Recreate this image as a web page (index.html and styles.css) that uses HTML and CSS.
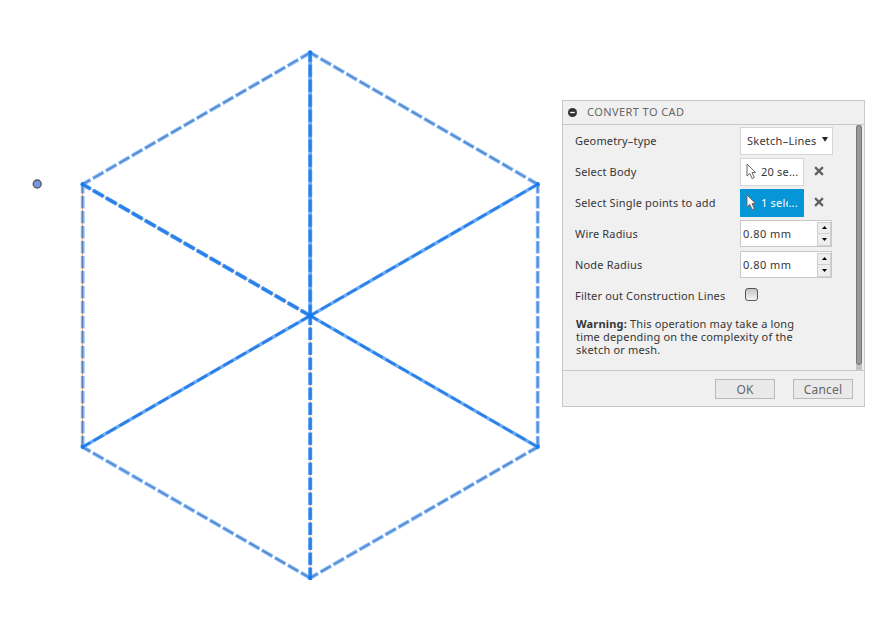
FILE: index.html
```html
<!DOCTYPE html>
<html lang="en">
<head>
<meta charset="utf-8">
<title>Convert to CAD</title>
<link rel="stylesheet" href="styles.css">
</head>
<body>
<main class="workspace">
  <svg class="sketch" width="562" height="626" viewBox="0 0 562 626">
    <g class="edge-halo">
      <path d="M82.700 184.300L310.200 52.700"/><path d="M310.200 52.700L537.700 184.300"/><path d="M537.700 184.300V447"/>
      <path d="M82.700 447L310.200 578"/><path d="M310.200 578L537.700 447"/><path d="M82.700 184.300V447"/>
    </g>
    <g class="edge-core">
      <path d="M82.700 184.300L310.200 52.700"/><path d="M310.200 52.700L537.700 184.300"/><path d="M537.700 184.300V447"/>
      <path d="M82.700 447L310.200 578"/><path d="M310.200 578L537.700 447"/>
    </g>
    <g class="trace"><path d="M82.500 184V447"/><path d="M82.700 184.300L310.200 315.700"/><path d="M310.200 315.700V578"/></g>
    <path class="edge-thin" d="M82.500 184V447"/>
    <g class="spoke-base"><path d="M310.200 52.700V315.700"/><path d="M82.700 447L310.200 315.700"/><path d="M310.200 315.700L537.700 184.300"/><path d="M310.200 315.700L537.700 447"/></g>
    <g class="spoke-halo"><path d="M82.700 184.300L310.200 315.700"/><path d="M310.200 315.700V578"/><path d="M310.200 52.700V315.700"/></g>
    <g class="spoke-core"><path d="M310.200 52.700V315.700"/><path d="M82.700 447L310.200 315.700"/><path d="M310.200 315.700L537.700 184.300"/><path d="M310.200 315.700L537.700 447"/><path d="M82.700 184.300L310.200 315.700"/><path d="M310.200 315.700V578"/></g>
    <g class="vertices"><circle cx="310.200" cy="52.500" r="2.200"/><circle cx="82.700" cy="184.300" r="2.200"/><circle cx="537.700" cy="184.300" r="2.200"/><circle cx="82.700" cy="446.800" r="2.200"/><circle cx="537.700" cy="446.800" r="2.200"/><circle cx="310.200" cy="578" r="2.200"/><circle cx="310.200" cy="315.700" r="3"/></g>
    <circle class="origin" cx="37.200" cy="184" r="4"/>
  </svg>

  <section class="dialog">
    <header class="title-bar">
      <svg class="collapse" width="9" height="9" viewBox="0 0 9 9"><circle cx="4.500" cy="4.500" r="4.500" fill="#333"/><path d="M2.200 4.500H6.800" stroke="#fff" stroke-width="1.300"/></svg>
      <span class="title">CONVERT TO CAD</span>
    </header>
    <div class="body">
      <div class="form">
        <div class="row"><span class="label">Geometry–type</span><span class="dropdown"><span>Sketch–Lines</span><svg width="6" height="5" viewBox="0 0 6 5"><path d="M0 0H6L3 4.800Z" fill="#222"/></svg></span></div>
        <div class="row"><span class="label">Select Body</span><span class="picker"><svg class="cursor" width="11" height="17" viewBox="0 0 11 17"><path d="M1 1V13L3.800 10.400L6.100 15.600L8.300 14.500L6 9.600H9.700Z"/></svg><span>20 se...</span></span><svg class="clear" width="10" height="10" viewBox="0 0 10 10"><path d="M1.100 1.100L8.900 8.900M8.900 1.100L1.100 8.900"/></svg></div>
        <div class="row"><span class="label">Select Single points to add</span><span class="picker active"><svg class="cursor" width="11" height="17" viewBox="0 0 11 17"><path d="M1 1V13L3.800 10.400L6.100 15.600L8.300 14.500L6 9.600H9.700Z"/></svg><span>1 sel<span class="cut">e</span>...</span></span><svg class="clear" width="10" height="10" viewBox="0 0 10 10"><path d="M1.100 1.100L8.900 8.900M8.900 1.100L1.100 8.900"/></svg></div>
        <div class="row"><span class="label">Wire Radius</span><span class="number"><span>0.80 mm</span><span class="stepper"><i><svg width="5" height="3" viewBox="0 0 5 3"><path d="M0 3H5L2.500 0Z"/></svg></i><i><svg width="5" height="3" viewBox="0 0 5 3"><path d="M0 0H5L2.500 3Z"/></svg></i></span></span></div>
        <div class="row"><span class="label">Node Radius</span><span class="number"><span>0.80 mm</span><span class="stepper"><i><svg width="5" height="3" viewBox="0 0 5 3"><path d="M0 3H5L2.500 0Z"/></svg></i><i><svg width="5" height="3" viewBox="0 0 5 3"><path d="M0 0H5L2.500 3Z"/></svg></i></span></span></div>
        <div class="row"><span class="label">Filter out Construction Lines</span><span class="checkbox"></span></div>
        <p class="warning"><b>Warning:</b> This operation may take a long<br>time depending on the complexity of the<br>sketch or mesh.</p>
      </div>
      <div class="scroll"><div class="thumb"></div></div>
    </div>
    <footer class="actions"><span class="button">OK</span><span class="button">Cancel</span></footer>
  </section>
</main>
</body>
</html>
```
FILE: styles.css
```css
* { box-sizing: border-box; }
body { margin: 0; background: #fff; font-family: "Noto Sans", sans-serif; font-size: 11px; color: #363636; }
svg { display: block; flex: none; }
.workspace { display: flex; align-items: flex-start; width: 879px; height: 626px; overflow: hidden; }

.sketch path { fill: none; }
.edge-halo { stroke: #82baff; stroke-width: 3.8; stroke-dasharray: 12.4 2.6; stroke-dashoffset: 3.3; }
.edge-core { stroke: #5b88c3; stroke-width: 1.6; stroke-dasharray: 11 4; stroke-dashoffset: 2.6; }
.trace { stroke: #e5ad83; stroke-width: 1; }
.edge-thin { stroke: #647fa8; stroke-width: 1.3; stroke-dasharray: 12.4 2.6; stroke-dashoffset: 3.3; }
.spoke-base { stroke: #6baffb; stroke-width: 3.6; }
.spoke-halo { stroke: #459afb; stroke-width: 4; stroke-dasharray: 12.6 2.4; stroke-dashoffset: 3.3; }
.spoke-core { stroke: #2b7ee3; stroke-width: 2.4; stroke-linecap: round; stroke-dasharray: 9.5 5.5; stroke-dashoffset: 1.7; }
.vertices { fill: #147bf5; }
.origin { fill: #7699d8; stroke: #505561; stroke-width: 1.3; }

.dialog { width: 303px; height: 307px; margin-top: 100px; background: #f0f0f0; border: 1px solid #c8c8c8; }
.title-bar { display: flex; align-items: center; height: 24px; padding-left: 5px; border-bottom: 1px solid #c8c8c8; color: #666; }
.title { margin: -2px 0 0 10px; font-size: 11px; letter-spacing: 0.42px; }
.body { display: flex; height: 245px; }
.form { width: 293px; padding-left: 12px; }
.row { display: flex; align-items: center; height: 31px; white-space: nowrap; }
.label { width: 165px; letter-spacing: 0.17px; }
.dropdown { display: flex; align-items: center; justify-content: space-between; width: 93px; height: 28px; padding: 0 4px 0 6px; background: #fff; border: 1px solid #d6d6d6; letter-spacing: 0.25px; }
.dropdown svg { margin-top: -3px; }
.picker { display: flex; align-items: center; width: 64px; height: 28px; padding-left: 5px; gap: 4px; background: #fff; border: 1px solid #d6d6d6; letter-spacing: 0.2px; }
.cursor { fill: #fff; stroke: #666; stroke-width: 1; }
.active { background: #0696d7; border-color: #0696d7; color: #fff; }
.active .cursor { stroke: #75665f; }
.cut { display: inline-block; width: 3px; height: 14px; overflow: hidden; vertical-align: bottom; line-height: 14px; }
.clear { margin: -1px 0 0 10px; stroke: #606060; stroke-width: 2.2; }
.number { display: flex; justify-content: space-between; align-items: center; width: 92px; height: 27px; padding-left: 2px; background: #fff; border: 1px solid #c8c8c8; letter-spacing: 0.45px; }
.stepper { display: flex; flex-direction: column; width: 14px; height: 24px; border: 1px solid #d0d0d0; background: #eee; }
.stepper i { display: flex; flex: 1; align-items: center; justify-content: center; }
.stepper i + i { border-top: 1px solid #d0d0d0; }
.checkbox { width: 13px; height: 13px; margin: -3px 0 0 5px; border: 1px solid #555; border-radius: 3px; background: linear-gradient(#c4c4c4, #f4f4f4); }
.warning { margin: 6px 0 0 1px; line-height: 13px; white-space: nowrap; letter-spacing: 0.17px; }
.scroll { width: 6px; height: 245px; background: #c4c4c4; }
.thumb { width: 6px; height: 240px; background: #999; border: 1px solid #777; border-radius: 3px; }
.actions { display: flex; justify-content: flex-end; align-items: center; gap: 18px; height: 36px; padding-right: 11px; border-top: 1px solid #c8c8c8; }
.button { display: flex; align-items: center; justify-content: center; width: 60px; height: 20px; padding-top: 1px; border: 1px solid #b9b9b9; background: #e9e9e9; color: #666; font-size: 12px; letter-spacing: 0.2px; }
```
